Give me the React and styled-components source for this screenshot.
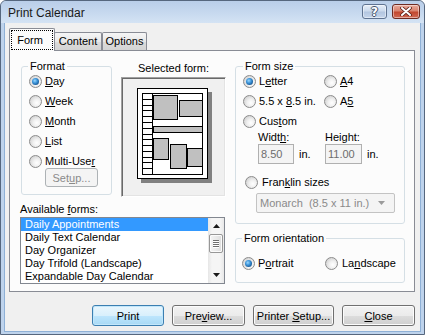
import React from "react";
import styled, { createGlobalStyle } from "styled-components";

const GlobalStyle = createGlobalStyle`
  html, body { margin: 0; padding: 0; background: #ffffff; }
  body { font-family: "Liberation Sans", Arial, sans-serif; font-size: 11px; color: #000; }
  *, *::before, *::after { box-sizing: border-box; }
`;

const Window = styled.div`
  width: 425px;
  height: 335px;
  border: 1px solid #56677e;
  border-radius: 6px 6px 0 0;
  background: #bed3ec;
  padding: 0 3px 2px;
  display: flex;
  flex-direction: column;
  overflow: hidden;
`;

const TitleBar = styled.div`
  height: 22px;
  margin: 0 -3px;
  padding: 3px 4px 0 7px;
  display: flex;
  align-items: flex-start;
  background: linear-gradient(180deg, #b9cee9 0%, #c7d9ef 55%, #d4e3f4 100%);
  border-radius: 5px 5px 0 0;
`;

const Title = styled.div`
  flex: 1;
  font-size: 12px;
  line-height: 19px;
  color: #1a1a1a;
`;

const CaptionButton = styled.div`
  width: ${(p) => p.$w}px;
  height: 15px;
  margin-left: ${(p) => p.$ml || 0}px;
  border: 1px solid ${(p) => (p.$close ? "#6e2b22" : "#5f7391")};
  border-radius: 3px;
  display: flex;
  align-items: center;
  justify-content: center;
  background: ${(p) =>
    p.$close
      ? "linear-gradient(180deg, #e9a99a 0%, #d9836f 45%, #c3472f 55%, #d06a55 100%)"
      : "linear-gradient(180deg, #e6eef8 0%, #ccdaed 45%, #b3c6e0 55%, #c6d6ec 100%)"};
  box-shadow: inset 0 0 0 1px rgba(255, 255, 255, 0.45);
`;

const HelpGlyph = styled.span`
  font-family: "DejaVu Sans", sans-serif;
  font-weight: bold;
  font-size: 12px;
  line-height: 12px;
  color: #ffffff;
  text-shadow: 1px 0 0 #44546b, -1px 0 0 #44546b, 0 1px 0 #44546b, 0 -1px 0 #44546b;
`;

const Client = styled.div`
  flex: 1;
  background: #f0f0f0;
  border: 1px solid #8eb0d6;
  border-top: none;
  padding: 5px 5px 0 4px;
  display: flex;
  flex-direction: column;
`;

const TabStrip = styled.div`
  height: 22px;
  display: flex;
  align-items: flex-end;
`;

const Tab = styled.div`
  position: relative;
  z-index: ${(p) => (p.$active ? 1 : 0)};
  width: ${(p) => p.$w}px;
  height: ${(p) => (p.$active ? 23 : 18)}px;
  margin-bottom: ${(p) => (p.$active ? -1 : 0)}px;
  margin-left: ${(p) => p.$ml || 0}px;
  border: 1px solid #898c95;
  border-bottom: none;
  border-radius: 2px 2px 0 0;
  background: ${(p) =>
    p.$active ? "#fcfcfc" : "linear-gradient(180deg, #f6f6f6 0%, #e8e8e8 50%, #dcdcdc 51%, #d3d3d3 100%)"};
  display: flex;
  align-items: center;
  justify-content: center;
  padding: ${(p) => (p.$active ? "1px 1px 1px 1px" : "0")};
  line-height: 13px;
`;

const FocusRing = styled.div`
  flex: 1;
  align-self: stretch;
  border: 1px dotted #000;
  display: flex;
  align-items: center;
  justify-content: center;
  padding-right: 4px;
`;

const Panel = styled.div`
  height: 242px;
  border: 1px solid #898c95;
  background: #fcfcfc;
  padding: 9px 0 0 10px;
  display: grid;
  grid-template-columns: 206px 170px;
  column-gap: 9px;
  align-items: start;
`;

const Column = styled.div`
  display: flex;
  flex-direction: column;
`;

const TopRow = styled.div`
  display: flex;
  align-items: flex-start;
  gap: 9px;
  padding-left: 1px;
`;

const Group = styled.fieldset`
  margin: ${(p) => p.$mt || 0}px 0 0 0;
  min-width: 0;
  width: ${(p) => p.$w}px;
  height: ${(p) => p.$h}px;
  border: 1px solid #d5dfe5;
  border-radius: 3px;
  padding: 0 0 0 ${(p) => p.$pl}px;
  display: flex;
  flex-direction: column;
  align-items: flex-start;
`;

const Legend = styled.legend`
  padding: 0 2px;
  margin-left: ${(p) => p.$ml || 0}px;
  line-height: 13px;
  font-size: 11px;
`;

const RadioList = styled.div`
  margin-top: -2px;
  display: flex;
  flex-direction: column;
`;

const RadioGrid = styled.div`
  margin-top: ${(p) => p.$mt || 0}px;
  display: grid;
  grid-template-columns: ${(p) => p.$col}px auto;
  grid-auto-rows: 20px;
`;

const Option = styled.div`
  height: 20px;
  display: flex;
  align-items: center;
  gap: ${(p) => p.$gap || 3}px;
  white-space: nowrap;
  margin-left: ${(p) => p.$ml || 0}px;
  margin-top: ${(p) => p.$mt || 0}px;
`;

const Radio = styled.span`
  flex: none;
  width: 13px;
  height: 13px;
  border-radius: 50%;
  border: 1px solid #8b8b8b;
  background: radial-gradient(circle at 62% 62%, #ffffff 0%, #f1f1f1 35%, #d2d2d2 80%, #c4c4c4 100%);
  display: flex;
  align-items: center;
  justify-content: center;
  &::after {
    content: "";
    display: ${(p) => (p.$on ? "block" : "none")};
    width: 7px;
    height: 7px;
    border-radius: 50%;
    background: radial-gradient(circle at 40% 38%, #9ad8ff 0%, #3b93d8 40%, #1a5a96 75%, #163f6b 100%);
  }
`;

const Key = styled.span`
  text-decoration: underline;
  text-underline-offset: 1px;
`;

const Button = styled.div`
  width: ${(p) => p.$w}px;
  height: ${(p) => p.$h || 21}px;
  margin-left: ${(p) => p.$ml || 0}px;
  margin-top: ${(p) => p.$mt || 0}px;
  border: 1px solid ${(p) => (p.$default ? "#3c7fb1" : p.$disabled ? "#adb2b5" : "#707070")};
  border-radius: 3px;
  display: flex;
  align-items: center;
  justify-content: center;
  color: ${(p) => (p.$disabled ? "#8a8a8a" : "#000")};
  background: ${(p) =>
    p.$default
      ? "linear-gradient(180deg, #eaf6fd 0%, #d9f0fc 50%, #bee6fd 51%, #a7d9f5 100%)"
      : p.$disabled
      ? "#f4f4f4"
      : "linear-gradient(180deg, #f2f2f2 0%, #ebebeb 50%, #dddddd 51%, #cfcfcf 100%)"};
  box-shadow: ${(p) =>
    p.$default ? "inset 0 0 0 1px #c2e7fb, 0 0 0 0px #000" : p.$disabled ? "none" : "inset 0 0 0 1px #fcfcfc"};
  white-space: nowrap;
`;

const FormColumn = styled.div`
  width: 105px;
  padding-top: 2px;
  display: flex;
  flex-direction: column;
`;

const Caption = styled.div`
  line-height: 13px;
  text-align: ${(p) => p.$align || "left"};
  margin-top: ${(p) => p.$mt || 0}px;
`;

const PreviewBox = styled.div`
  margin-top: 2px;
  width: 105px;
  height: 120px;
  border: 1px solid;
  border-color: #a0a0a0 #ffffff #ffffff #a0a0a0;
  box-shadow: inset 1px 1px 0 #696969, inset -1px -1px 0 #e3e3e3;
  background: #f0f0f0;
  display: flex;
`;

const ListBox = styled.div`
  margin-top: 1px;
  width: 205px;
  height: 67px;
  border: 1px solid #828790;
  background: #ffffff;
  display: flex;
`;

const Items = styled.div`
  flex: 1;
  display: flex;
  flex-direction: column;
  overflow: hidden;
`;

const Item = styled.div`
  height: 13px;
  line-height: 13px;
  padding-left: 4px;
  white-space: nowrap;
  background: ${(p) => (p.$selected ? "#3399ff" : "transparent")};
  color: ${(p) => (p.$selected ? "#ffffff" : "#000000")};
`;

const ScrollBar = styled.div`
  width: 16px;
  display: flex;
  flex-direction: column;
  align-items: center;
  background: linear-gradient(90deg, #e6e6e6 0%, #f5f5f5 25%, #f5f5f5 75%, #e8e8e8 100%);
`;

const ScrollArrow = styled.div`
  height: 16px;
  width: 100%;
  display: flex;
  align-items: center;
  justify-content: center;
`;

const Thumb = styled.div`
  width: 14px;
  height: 19px;
  border: 1px solid #979797;
  border-radius: 2px;
  background: linear-gradient(90deg, #f4f4f4 0%, #e9e9e9 50%, #dcdcdc 100%);
  box-shadow: inset 0 0 0 1px #fbfbfb;
  display: flex;
  flex-direction: column;
  align-items: center;
  justify-content: center;
  gap: 1px;
`;

const Grip = styled.span`
  width: 6px;
  height: 1px;
  background: #6e6e6e;
  box-shadow: 0 1px 0 #ffffff;
`;

const Spacer = styled.div`
  flex: 1;
`;

const DimRow = styled.div`
  margin-left: 15px;
  display: flex;
`;

const DimBlock = styled.div`
  width: ${(p) => p.$w}px;
  display: flex;
  flex-direction: column;
`;

const InputRow = styled.div`
  display: flex;
  align-items: center;
  gap: 5px;
`;

const TextInput = styled.div`
  width: ${(p) => p.$w}px;
  height: 20px;
  border: 1px solid #b0b0b0;
  background: #f4f4f4;
  color: #6d6d6d;
  padding-left: 2px;
  line-height: 18px;
`;

const Select = styled.div`
  margin: 1px 0 0 13px;
  width: 139px;
  height: 20px;
  border: 1px solid #c3c3c3;
  border-radius: 2px;
  background: #f4f4f4;
  color: #8a8a8a;
  display: flex;
  align-items: center;
  padding: 0 9px 0 3px;
  white-space: pre;
`;

const SelectText = styled.span`
  flex: 1;
`;

const ButtonRow = styled.div`
  margin-top: 13px;
  display: flex;
  justify-content: flex-end;
  gap: 8px;
`;

const Triangle = ({ up, color = "#1a1a1a" }) => (
  <svg width="7" height="4" viewBox="0 0 7 4">
    <polygon points={up ? "0,4 3.5,0 7,4" : "0,0 7,0 3.5,4"} fill={color} />
  </svg>
);

const CloseGlyph = () => (
  <svg width="12" height="9" viewBox="0 0 12 9">
    <path d="M2 1 L10 8 M10 1 L2 8" stroke="#5a1f17" strokeWidth="3.6" strokeLinecap="round" />
    <path d="M2 1 L10 8 M10 1 L2 8" stroke="#ffffff" strokeWidth="2" strokeLinecap="round" />
  </svg>
);

const slotLines = Array.from({ length: 13 }, (_, i) => 15.5 + Math.round((i + 1) * 5.79));

const FormPicture = () => (
  <svg width="103" height="118" viewBox="0 0 103 118">
    <rect x="19" y="14" width="71" height="91" fill="#808080" />
    <rect x="15.5" y="10.5" width="70" height="90" fill="#ffffff" stroke="#000" />
    <rect x="20.5" y="15.5" width="60" height="81" fill="none" stroke="#000" />
    <line x1="30.5" y1="15.5" x2="30.5" y2="96.5" stroke="#000" />
    {slotLines.map((y) => (
      <line key={y} x1="20.5" y1={y} x2="30.5" y2={y} stroke="#000" />
    ))}
    <g fill="#c0c0c0" stroke="#000">
      <rect x="31.5" y="17.5" width="24" height="24" />
      <rect x="57.5" y="22.5" width="23" height="16" />
      <rect x="31.5" y="48.5" width="49" height="6" />
      <rect x="31.5" y="60.5" width="15" height="21" />
      <rect x="48.5" y="66.5" width="16" height="24" />
      <rect x="65.5" y="70.5" width="15" height="18" />
    </g>
  </svg>
);

const forms = [
  "Daily Appointments",
  "Daily Text Calendar",
  "Day Organizer",
  "Day Trifold (Landscape)",
  "Expandable Day Calendar",
];

export default function App() {
  return (
    <>
      <GlobalStyle />
      <Window>
        <TitleBar>
          <Title>Print Calendar</Title>
          <CaptionButton $w={25}>
            <HelpGlyph>?</HelpGlyph>
          </CaptionButton>
          <CaptionButton $w={28} $ml={5} $close>
            <CloseGlyph />
          </CaptionButton>
        </TitleBar>
        <Client>
          <TabStrip>
            <Tab $active $w={46}>
              <FocusRing>Form</FocusRing>
            </Tab>
            <Tab $w={48} $ml={-1}>Content</Tab>
            <Tab $w={45}>Options</Tab>
          </TabStrip>
          <Panel>
            <Column>
              <TopRow>
                <Group $w={91} $h={135} $pl={7}>
                  <Legend $ml={-1}>Format</Legend>
                  <RadioList>
                    <Option>
                      <Radio $on />
                      <span>
                        <Key>D</Key>ay
                      </span>
                    </Option>
                    <Option>
                      <Radio />
                      <span>
                        <Key>W</Key>eek
                      </span>
                    </Option>
                    <Option>
                      <Radio />
                      <span>
                        <Key>M</Key>onth
                      </span>
                    </Option>
                    <Option>
                      <Radio />
                      <span>
                        <Key>L</Key>ist
                      </span>
                    </Option>
                    <Option>
                      <Radio />
                      <span>
                        Multi-Use<Key>r</Key>
                      </span>
                    </Option>
                  </RadioList>
                  <Button $w={53} $h={19} $ml={16} $mt={-3} $disabled>
                    <span>
                      Set<Key>u</Key>p...
                    </span>
                  </Button>
                </Group>
                <FormColumn>
                  <Caption $align="center">Selected form:</Caption>
                  <PreviewBox>
                    <FormPicture />
                  </PreviewBox>
                </FormColumn>
              </TopRow>
              <Caption $mt={6}>
                Available <Key>f</Key>orms:
              </Caption>
              <ListBox>
                <Items>
                  {forms.map((f, i) => (
                    <Item key={f} $selected={i === 0}>
                      {f}
                    </Item>
                  ))}
                </Items>
                <ScrollBar>
                  <ScrollArrow>
                    <Triangle up />
                  </ScrollArrow>
                  <Thumb>
                    <Grip />
                    <Grip />
                    <Grip />
                    <Grip />
                  </Thumb>
                  <Spacer />
                  <ScrollArrow>
                    <Triangle />
                  </ScrollArrow>
                </ScrollBar>
              </ListBox>
            </Column>
            <Column>
              <Group $w={170} $h={164} $pl={7}>
                <Legend>Form size</Legend>
                <RadioGrid $col={81} $mt={-2}>
                  <Option>
                    <Radio $on />
                    <span>
                      L<Key>e</Key>tter
                    </span>
                  </Option>
                  <Option>
                    <Radio />
                    <span>
                      <Key>A</Key>4
                    </span>
                  </Option>
                  <Option>
                    <Radio />
                    <span>
                      5.5 x <Key>8</Key>.5 in.
                    </span>
                  </Option>
                  <Option>
                    <Radio />
                    <span>
                      A<Key>5</Key>
                    </span>
                  </Option>
                  <Option>
                    <Radio />
                    <span>
                      Cus<Key>t</Key>om
                    </span>
                  </Option>
                </RadioGrid>
                <DimRow>
                  <DimBlock $w={67}>
                    <Caption>
                      Widt<Key>h</Key>:
                    </Caption>
                    <InputRow>
                      <TextInput $w={36}>8.50</TextInput>
                      <span>in.</span>
                    </InputRow>
                  </DimBlock>
                  <DimBlock $w={70}>
                    <Caption>
                      Hei<Key>g</Key>ht:
                    </Caption>
                    <InputRow>
                      <TextInput $w={37}>11.00</TextInput>
                      <span>in.</span>
                    </InputRow>
                  </DimBlock>
                </DimRow>
                <Option $ml={2} $mt={8} $gap={4}>
                  <Radio />
                  <span>
                    Fran<Key>k</Key>lin sizes
                  </span>
                </Option>
                <Select>
                  <SelectText>{"Monarch  (8.5 x 11 in.)"}</SelectText>
                  <Triangle color="#9a9a9a" />
                </Select>
              </Group>
              <Group $w={170} $h={51} $pl={6} $mt={8}>
                <Legend>Form orientation</Legend>
                <RadioGrid $col={83} $mt={8}>
                  <Option>
                    <Radio $on />
                    <span>
                      P<Key>o</Key>rtrait
                    </span>
                  </Option>
                  <Option $gap={4}>
                    <Radio />
                    <span>
                      La<Key>n</Key>dscape
                    </span>
                  </Option>
                </RadioGrid>
              </Group>
            </Column>
          </Panel>
          <ButtonRow>
            <Button $w={72} $default>
              Print
            </Button>
            <Button $w={73}>
              <span>
                Pre<Key>v</Key>iew...
              </span>
            </Button>
            <Button $w={81}>
              <span>
                Printer <Key>S</Key>etup...
              </span>
            </Button>
            <Button $w={73}>
              <span>
                <Key>C</Key>lose
              </span>
            </Button>
          </ButtonRow>
        </Client>
      </Window>
    </>
  );
}
